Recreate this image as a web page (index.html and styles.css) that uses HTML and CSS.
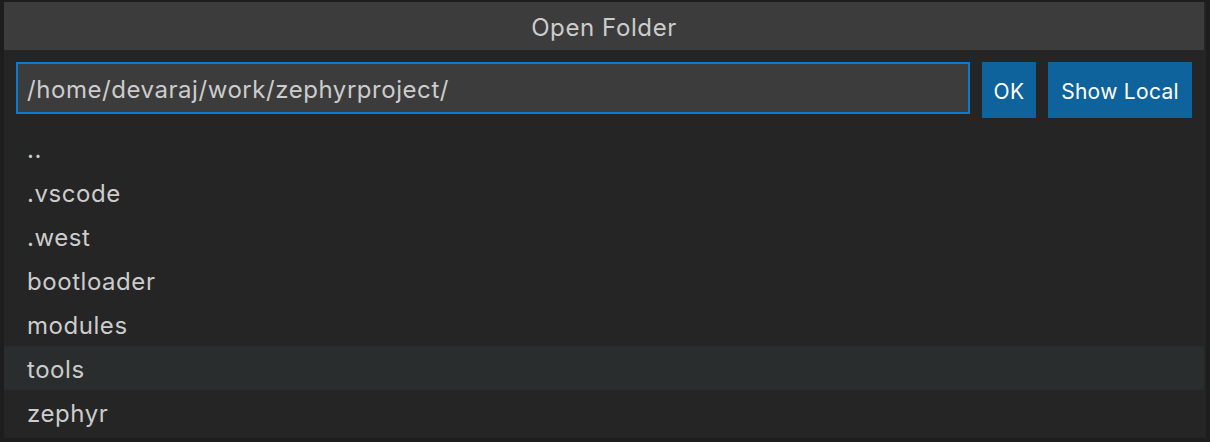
FILE: index.html
```html
<!DOCTYPE html>
<html>
<head>
<meta charset="utf-8">
<link rel="stylesheet" href="styles.css">
</head>
<body>
<div class="panel">
  <div class="title">Open Folder</div>
  <div class="inputrow">
    <div class="input">/home/devaraj/work/zephyrproject/</div>
    <button class="btn ok">OK</button>
    <button class="btn local">Show Local</button>
  </div>
  <ul class="list">
    <li class="item">..</li>
    <li class="item">.vscode</li>
    <li class="item">.west</li>
    <li class="item">bootloader</li>
    <li class="item">modules</li>
    <li class="item hover">tools</li>
    <li class="item">zephyr</li>
  </ul>
</div>
</body>
</html>
```
FILE: styles.css
```css
html, body {
  margin: 0;
  padding: 0;
  background: #1d1d1d;
  width: 1210px;
  height: 442px;
  overflow: hidden;
}
body {
  font-family: Inter, "Noto Sans", sans-serif;
  color: #cccccc;
  padding-top: 2px;
  box-sizing: border-box;
}
.panel {
  margin-left: 4px;
  width: 1202px;
  height: 436px;
  background: #252526;
  display: flex;
  flex-direction: column;
}
.title {
  height: 48px;
  margin-right: 2px;
  background: #3c3c3c;
  display: flex;
  align-items: center;
  justify-content: center;
  font-size: 24px;
  letter-spacing: 0.6px;
  padding-top: 2px;
  box-sizing: border-box;
}
.inputrow {
  display: flex;
  align-items: flex-start;
  gap: 12px;
  padding: 12px 14px 8px 12px;
}
.input {
  flex: 1;
  height: 52px;
  box-sizing: border-box;
  border: 2px solid #0a7ad2;
  background: #3c3c3c;
  display: flex;
  align-items: center;
  padding-left: 9px;
  padding-top: 2px;
  font-size: 24px;
  letter-spacing: 0.55px;
  color: #cccccc;
}
.btn {
  height: 56px;
  border: none;
  background: #0e639c;
  color: #ffffff;
  font-family: inherit;
  font-size: 21px;
  letter-spacing: 0.3px;
  padding: 2px 0 0 0;
}
.ok { width: 54px; }
.local { width: 144px; }
.list {
  list-style: none;
  margin: 0;
  padding: 0;
  margin-right: 2px;
}
.item {
  height: 44px;
  display: flex;
  align-items: center;
  padding-left: 23px;
  padding-top: 2px;
  box-sizing: border-box;
  font-size: 24px;
  letter-spacing: 0.55px;
}
.hover {
  background: #2a2d2e;
}
```
